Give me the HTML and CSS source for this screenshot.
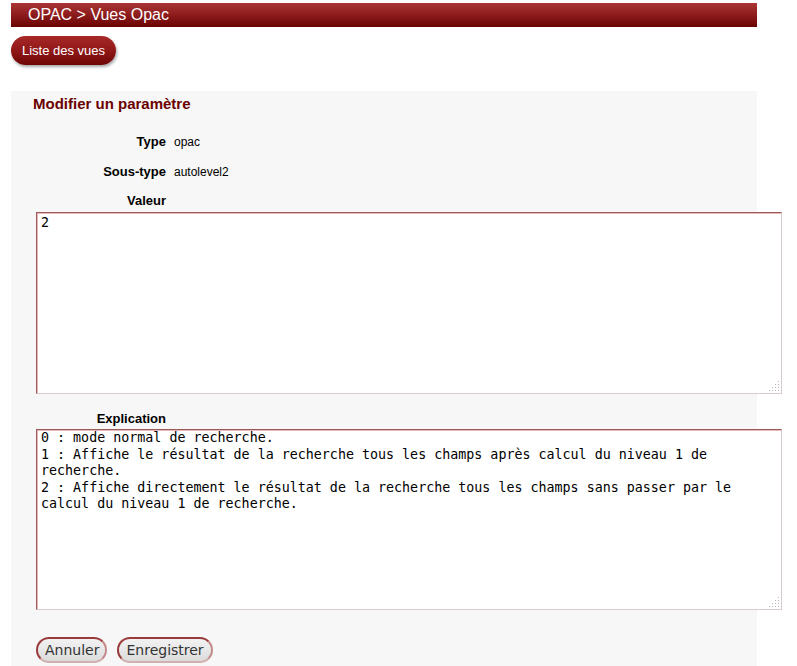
FILE: index.html
```html
<!DOCTYPE html>
<html lang="fr">
<head>
<meta charset="utf-8">
<title>OPAC &gt; Vues Opac</title>
<link rel="stylesheet" href="styles.css">
</head>
<body>
<div class="page">
  <h1 class="titlebar">OPAC &gt; Vues Opac</h1>
  <div class="toolbar">
    <button class="btn-red" type="button">Liste des vues</button>
  </div>
  <form class="panel">
    <h3 class="panel-title">Modifier un paramètre</h3>
    <div class="row row-first">
      <span class="label">Type</span>
      <span class="value">opac</span>
    </div>
    <div class="row">
      <span class="label">Sous-type</span>
      <span class="value">autolevel2</span>
    </div>
    <div class="row row-valeur">
      <span class="label">Valeur</span>
    </div>
    <div class="field-wrap field-wrap-valeur">
      <textarea class="field field-valeur">2</textarea>
      <svg class="grip" width="11" height="11" viewBox="0 0 11 11" aria-hidden="true">
        <rect x="9" y="0" width="1" height="1"/>
        <rect x="6" y="3" width="1" height="1"/><rect x="9" y="3" width="1" height="1"/>
        <rect x="3" y="6" width="1" height="1"/><rect x="6" y="6" width="1" height="1"/><rect x="9" y="6" width="1" height="1"/>
        <rect x="0" y="9" width="1" height="1"/><rect x="3" y="9" width="1" height="1"/><rect x="6" y="9" width="1" height="1"/><rect x="9" y="9" width="1" height="1"/>
      </svg>
    </div>
    <div class="row row-expl">
      <span class="label">Explication</span>
    </div>
    <div class="field-wrap field-wrap-expl">
      <textarea class="field field-expl">0 : mode normal de recherche.
1 : Affiche le résultat de la recherche tous les champs après calcul du niveau 1 de recherche.
2 : Affiche directement le résultat de la recherche tous les champs sans passer par le calcul du niveau 1 de recherche.</textarea>
      <svg class="grip" width="11" height="11" viewBox="0 0 11 11" aria-hidden="true">
        <rect x="9" y="0" width="1" height="1"/>
        <rect x="6" y="3" width="1" height="1"/><rect x="9" y="3" width="1" height="1"/>
        <rect x="3" y="6" width="1" height="1"/><rect x="6" y="6" width="1" height="1"/><rect x="9" y="6" width="1" height="1"/>
        <rect x="0" y="9" width="1" height="1"/><rect x="3" y="9" width="1" height="1"/><rect x="6" y="9" width="1" height="1"/><rect x="9" y="9" width="1" height="1"/>
      </svg>
    </div>
    <div class="actions">
      <button class="btn-grey btn-annuler" type="button">Annuler</button>
      <button class="btn-grey" type="submit">Enregistrer</button>
    </div>
  </form>
</div>
</body>
</html>
```
FILE: styles.css
```css
html, body {
  margin: 0;
  padding: 0;
  background: #ffffff;
}
body {
  font-family: "Liberation Sans", Arial, sans-serif;
  font-size: 12px;
  color: #000;
  overflow: hidden;
}
.page {
  width: 746px;
  margin-left: 11px;
  padding-top: 3px;
}
.titlebar {
  margin: 0;
  height: 24px;
  box-sizing: border-box;
  padding: 3px 0 0 17px;
  font-size: 16px;
  font-weight: normal;
  line-height: 18px;
  color: #ffffff;
  background: linear-gradient(to bottom, #ab3535 0%, #8c1c1c 50%, #6b0303 100%);
}
.toolbar {
  padding-top: 9px;
  height: 64px;
  box-sizing: border-box;
}
.btn-red {
  height: 29px;
  width: 105px;
  padding: 0;
  border: none;
  border-radius: 15px;
  font-family: "Liberation Sans", Arial, sans-serif;
  font-size: 13px;
  color: #ffffff;
  background: linear-gradient(to bottom, #a82828 0%, #901818 50%, #6e0606 100%);
  box-shadow: 1px 2px 3px rgba(0, 0, 0, 0.35);
}
.panel {
  background: #f7f7f7;
  padding: 4px 0 40px 0;
  min-height: 600px;
}
.panel-title {
  margin: 0 0 0 22px;
  font-size: 15px;
  line-height: 18px;
  font-weight: bold;
  color: #6b0000;
}
.row {
  display: flex;
  align-items: center;
  height: 17px;
  margin-top: 13px;
}
.row-first {
  margin-top: 20px;
}
.label {
  width: 155px;
  text-align: right;
  font-size: 13px;
  font-weight: bold;
}
.value {
  margin-left: 8px;
  font-size: 12px;
}
.row-valeur {
  margin-top: 12px;
}
.field-wrap {
  position: relative;
  width: 746px;
  margin-left: 25px;
}
.field-wrap-valeur {
  margin-top: 3px;
}
.field {
  display: block;
  box-sizing: border-box;
  width: 746px;
  margin: 0;
  padding: 2px 4px;
  font-family: "DejaVu Sans Mono", monospace;
  font-size: 13.33px;
  line-height: 16.5px;
  color: #000;
  background: #ffffff;
  border: 1px solid;
  border-color: #9c5a5a #d6cccc #d6cccc #9c5a5a;
  box-shadow: inset 1px 1px 0 #e6b9b9;
  resize: none;
  outline: none;
}
.grip {
  position: absolute;
  right: 2px;
  bottom: 2px;
  fill: #b4b4b4;
}
.field-valeur {
  height: 182px;
}
.row-expl {
  margin-top: 16px;
}
.field-wrap-expl {
  margin-top: 2px;
}
.field-expl {
  height: 181px;
  padding-top: 0;
}
.actions {
  display: flex;
  gap: 10px;
  margin: 27px 0 0 25px;
}
.btn-grey {
  height: 26px;
  padding: 0 7px;
  font-family: "DejaVu Sans", sans-serif;
  font-size: 14px;
  color: #333;
  border: 2px solid #9a3a3a;
  border-bottom-color: #d3b0b0;
  border-right-color: #c48a8a;
  border-radius: 13px;
  background: linear-gradient(to bottom, #f2f2f2 0%, #dcdcdc 100%);
}
.btn-annuler {
  padding: 0 6px 0 7px;
}
```
